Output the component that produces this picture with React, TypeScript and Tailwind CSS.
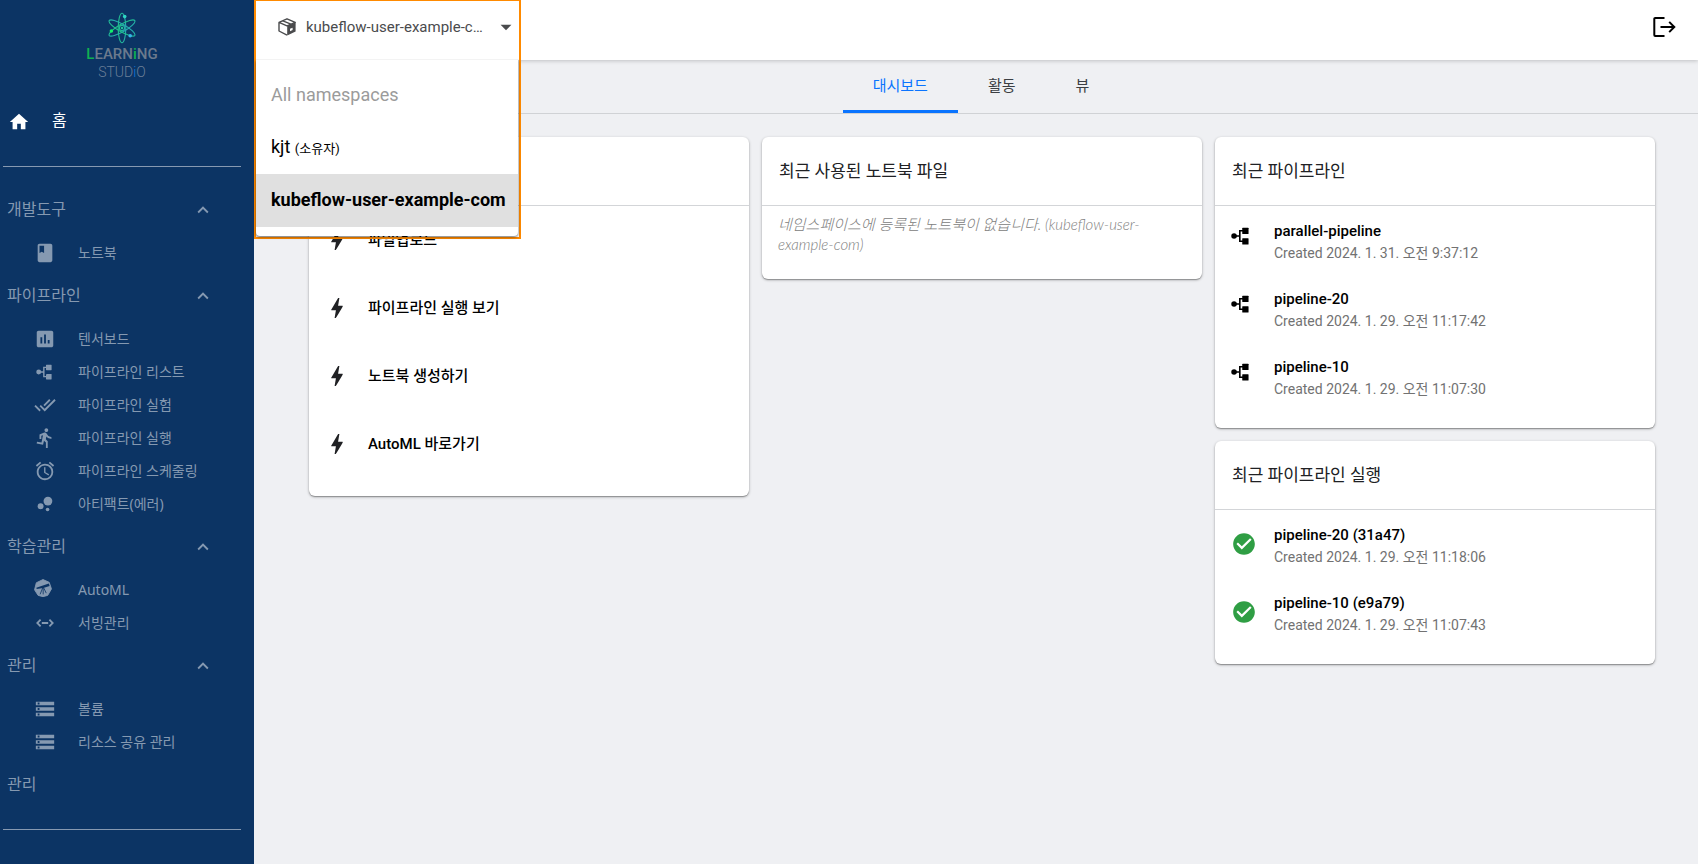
import type { ReactNode } from "react";
import {
  MdAccessAlarm,
  MdArrowDropDown,
  MdAssessment,
  MdBubbleChart,
  MdCheckCircle,
  MdClass,
  MdDirectionsRun,
  MdDoneAll,
  MdHome,
  MdKeyboardArrowUp,
  MdStorage,
} from "react-icons/md";

function PipelineIcon({ className }: { className: string }) {
  return (
    <svg viewBox="0 0 20 20" className={className} fill="currentColor" aria-hidden="true">
      <circle cx="3.4" cy="10" r="3.1" />
      <rect x="12.5" y="0.8" width="7" height="7" rx="0.6" />
      <rect x="12.5" y="12.4" width="7" height="7" rx="0.6" />
      <path d="M4 10h5M14 4.2H9.8v11.6H14" fill="none" stroke="currentColor" strokeWidth="1.8" />
    </svg>
  );
}

function KatibIcon({ className }: { className: string }) {
  return (
    <svg viewBox="0 0 20 20" className={className} aria-hidden="true">
      <path
        d="M10 0.6 16.9 3.7 19.4 11 15.2 18.2 10 19.6 4.6 18.2 0.6 12 2.6 4.2Z"
        fill="currentColor"
        stroke="currentColor"
        strokeLinejoin="round"
      />
      <path d="M3 11.2 2.6 9.8 16.4 4.9l1 2.8-7 2.2Z" fill="#0c3464" />
      <path d="M9.8 9.5 6.8 17M10.2 9.5v7.6M10.6 9.5l3 6.2" stroke="#0c3464" strokeWidth="0.9" />
    </svg>
  );
}

function ServingIcon({ className }: { className: string }) {
  return (
    <svg viewBox="0 0 18 18" className={className} fill="none" stroke="currentColor" strokeWidth="1.8" aria-hidden="true">
      <path d="M4.6 5.6 1.3 9l3.3 3.4M13.4 5.6 16.7 9l-3.3 3.4M5.8 9h6.4" />
    </svg>
  );
}

function BoltIcon() {
  return (
    <svg viewBox="0 0 24 24" className="size-[26px]" fill="#202124" aria-hidden="true">
      <path d="M11 21.2H9.8L11 14H7.2c-.7 0-.6-.5-.3-.9C8.5 10.6 10.6 7 13 2.8h1.2L13 10h3.8c.6 0 .6.4.4.8C13 17.8 11 21.2 11 21.2z" />
    </svg>
  );
}

function BoxIcon() {
  return (
    <svg viewBox="0 0 18 18" className="h-[18px] w-[18px] shrink-0" aria-hidden="true">
      <path d="M9.2 7.8 17.6 4.6V13.4L9.2 17.6Z" fill="#4a4b4d" />
      <path
        d="M9 7.8 1 4.4V13L9 17.2M1 4.4 9 0.8 17.2 4.4 9 7.8ZM4.8 2.8 13 6.2"
        fill="none"
        stroke="#4a4b4d"
        strokeWidth="1.4"
        strokeLinejoin="round"
      />
      <path d="M12 10.8 14.6 9.7V12L12 13.2Z" fill="#fff" />
    </svg>
  );
}

function LogoutIcon() {
  return (
    <svg viewBox="0 0 24 24" className="size-6" fill="none" stroke="#000" strokeWidth="2" aria-hidden="true">
      <path d="M12.5 3H3.2a.9.9 0 0 0-.9.9v16.2a.9.9 0 0 0 .9.9h9.3" />
      <path d="M8.5 12h14M17.2 6.9 22.3 12l-5.1 5.1" />
    </svg>
  );
}

function Logo() {
  return (
    <div className="flex flex-col items-center pt-3">
      <svg viewBox="0 0 28 32" className="h-8 w-7" fill="none" aria-hidden="true">
        <defs>
          <linearGradient id="atom" gradientUnits="userSpaceOnUse" x1="1" y1="0" x2="27" y2="0">
            <stop offset="0" stopColor="#16e05f" />
            <stop offset="0.5" stopColor="#22b59d" />
            <stop offset="1" stopColor="#2f96e0" />
          </linearGradient>
        </defs>
        <g stroke="url(#atom)" strokeWidth="1.1">
          <ellipse cx="14" cy="16" rx="3.8" ry="14.8" />
          <ellipse cx="14" cy="16" rx="3.8" ry="14.8" transform="rotate(60 14 16)" />
          <ellipse cx="14" cy="16" rx="3.8" ry="14.8" transform="rotate(-60 14 16)" />
          <circle cx="14" cy="16" r="2.6" />
        </g>
        <circle cx="14" cy="16" r="1.2" fill="#22c59d" />
        <circle cx="16.7" cy="4.6" r="1.8" fill="#2fd6c4" />
        <circle cx="3.4" cy="19" r="1.8" fill="#12f06a" />
        <circle cx="22.2" cy="23.8" r="1.8" fill="#35b6e6" />
      </svg>
      <p className="mt-px text-[15px] leading-[18px] font-medium text-[#6b7a8d]">
        <span className="text-[#10b052]">L</span>EARN<span className="text-[#10b052]">i</span>NG
      </p>
      <p className="text-sm leading-[18px] font-light text-[#6b7f98]">
        STUD<span className="text-[#0c78d8]">i</span>O
      </p>
    </div>
  );
}

type NavItem = { label: string; icon: ReactNode };
type NavSection = { id: string; label: string; items: NavItem[] };

const navIcon = "size-[22px]";

const sections: NavSection[] = [
  { id: "dev", label: "개발도구", items: [{ label: "노트북", icon: <MdClass className={navIcon} /> }] },
  {
    id: "pipeline",
    label: "파이프라인",
    items: [
      { label: "텐서보드", icon: <MdAssessment className={navIcon} /> },
      { label: "파이프라인 리스트", icon: <PipelineIcon className="mr-0.5 size-4" /> },
      { label: "파이프라인 실험", icon: <MdDoneAll className={navIcon} /> },
      { label: "파이프라인 실행", icon: <MdDirectionsRun className={navIcon} /> },
      { label: "파이프라인 스케줄링", icon: <MdAccessAlarm className={navIcon} /> },
      { label: "아티팩트(에러)", icon: <MdBubbleChart className={navIcon} /> },
    ],
  },
  {
    id: "training",
    label: "학습관리",
    items: [
      { label: "AutoML", icon: <KatibIcon className="mr-1 mb-1 size-[18px]" /> },
      { label: "서빙관리", icon: <ServingIcon className="size-[18px]" /> },
    ],
  },
  {
    id: "manage",
    label: "관리",
    items: [
      { label: "볼륨", icon: <MdStorage className={navIcon} /> },
      { label: "리소스 공유 관리", icon: <MdStorage className={navIcon} /> },
    ],
  },
  { id: "admin", label: "관리", items: [] },
];

function Sidebar() {
  return (
    <aside className="w-[254px] shrink-0 bg-[#0c3464] pr-2.5 font-['Noto_Sans','Noto_Sans_CJK_KR',sans-serif]">
      <div className="font-['Roboto',sans-serif]">
        <Logo />
      </div>
      <a href="#home" className="mt-[15px] flex h-[52px] items-center gap-[22px] pl-2 text-base text-white">
        <MdHome className="size-[22px]" />
        <span className="pb-1">홈</span>
      </a>
      <hr className="mx-[3px] mt-[18px] mb-[17px] border-[#8799b1]" />
      <nav className="text-[#8599b1]">
        {sections.map((section) => (
          <section key={section.id}>
            <button type="button" className="flex h-[53px] w-full items-center justify-between pr-[30px] pb-0.5 pl-[7px] text-base">
              <span className="pb-0.5">{section.label}</span>
              {section.items.length > 0 && <MdKeyboardArrowUp className="size-[22px]" />}
            </button>
            {section.items.map((item) => (
              <a key={item.label} href={`#${section.id}`} className="flex h-[33px] items-center pb-0.5 pl-[34px] text-sm">
                <span className="flex w-11 items-center">
                  <span className="flex w-[22px] justify-center">{item.icon}</span>
                </span>
                {item.label}
              </a>
            ))}
          </section>
        ))}
      </nav>
      <hr className="mx-[3px] mt-[17px] border-[#8799b1]" />
    </aside>
  );
}

function NamespaceSelector() {
  return (
    <div className="absolute top-0 left-0 z-20 w-[267px] border-2 border-t border-[#ff8a00]">
      <button
        type="button"
        aria-haspopup="listbox"
        aria-expanded="true"
        className="relative z-10 flex h-[59px] w-full items-center border-b border-[#f3f3f3] bg-white pb-1.5 pl-[22px] text-[15px] text-[#4a4b4d]"
      >
        <BoxIcon />
        <span className="ml-2.5 flex-1 text-left whitespace-nowrap">kubeflow-user-example-c…</span>
        <MdArrowDropDown className="size-[26px] shrink-0" />
      </button>
      <div
        role="listbox"
        aria-label="Namespace"
        className="mr-px mb-px flex flex-col rounded-b-sm bg-white pt-2 pb-[9px] text-lg text-black shadow-[0_1px_3px_rgba(0,0,0,0.6)]"
      >
        <button type="button" role="option" aria-selected="false" disabled className="h-[53px] px-[15px] text-left text-[#9b9b9b]">
          All namespaces
        </button>
        <button type="button" role="option" aria-selected="false" className="h-[53px] px-[15px] pb-0.5 text-left">
          kjt <span className="text-[13px]">(소유자)</span>
        </button>
        <button
          type="button"
          role="option"
          aria-selected="true"
          className="h-[53px] bg-[#e0e0e0] px-[15px] pb-0.5 text-left font-bold whitespace-nowrap"
        >
          kubeflow-user-example-com
        </button>
      </div>
    </div>
  );
}

function Card({ title, children }: { title?: string; children: ReactNode }) {
  return (
    <section className="rounded-md bg-white shadow-[0_1px_3px_rgba(0,0,0,0.3),0_1px_1px_rgba(0,0,0,0.25)]">
      <header className="flex h-[69px] items-center border-b border-[#d3d5d8] px-[17px] pt-0.5">
        {title && <h2 className="text-[17px] text-[#202124]">{title}</h2>}
      </header>
      {children}
    </section>
  );
}

function QuickLinks({ items }: { items: string[] }) {
  return (
    <ul className="pb-[18px]">
      {items.map((label) => (
        <li key={label}>
          <a href="#link" className="flex h-[68px] items-center pl-[15px] text-[15px] font-medium text-black">
            <span className="w-11">
              <BoltIcon />
            </span>
            {label}
          </a>
        </li>
      ))}
    </ul>
  );
}

type Entry = { name: string; created: string };

function EntryList({ entries, icon }: { entries: Entry[]; icon: ReactNode }) {
  return (
    <ul className="pb-[18px]">
      {entries.map((entry) => (
        <li key={entry.name}>
          <a href="#entry" className="flex h-[68px] items-center pl-4">
            <span className="w-[43px]">{icon}</span>
            <span className="flex flex-col pt-1">
              <span className="text-[15px] leading-[22px] font-medium text-black">{entry.name}</span>
              <span className="text-sm leading-[22px] text-[#727272]">Created {entry.created}</span>
            </span>
          </a>
        </li>
      ))}
    </ul>
  );
}

const pipelines: Entry[] = [
  { name: "parallel-pipeline", created: "2024. 1. 31. 오전 9:37:12" },
  { name: "pipeline-20", created: "2024. 1. 29. 오전 11:17:42" },
  { name: "pipeline-10", created: "2024. 1. 29. 오전 11:07:30" },
];

const runs: Entry[] = [
  { name: "pipeline-20 (31a47)", created: "2024. 1. 29. 오전 11:18:06" },
  { name: "pipeline-10 (e9a79)", created: "2024. 1. 29. 오전 11:07:43" },
];

export default function App() {
  return (
    <div className="flex min-h-screen bg-[#eff0f3] font-['Roboto','Noto_Sans_CJK_KR',sans-serif]">
      <Sidebar />
      <div className="relative min-w-0 flex-1">
        <NamespaceSelector />
        <header className="relative z-10 flex h-[60px] items-center justify-end bg-white pr-[22px] pb-1.5 shadow-[0_1px_4px_rgba(0,0,0,0.2)]">
          <button type="button" aria-label="Logout">
            <LogoutIcon />
          </button>
        </header>
        <nav className="flex h-[54px] justify-center border-b border-[#d0d2d5] pl-2.5 text-[15px] text-[#3c3f43]">
          <a href="#dashboard" className="flex items-center border-b-[3px] border-[#0a74ff] px-[30px] pt-0.5 text-[#0a74ff]">
            대시보드
          </a>
          <a href="#activity" className="flex items-center border-b-[3px] border-transparent px-[30px] pt-0.5">
            활동
          </a>
          <a href="#view" className="flex items-center border-b-[3px] border-transparent px-[30px] pt-0.5">
            뷰
          </a>
        </nav>
        <main className="grid grid-cols-3 items-start gap-[13px] pt-[23px] pr-[43px] pl-[55px]">
          <Card>
            <QuickLinks items={["파일업로드", "파이프라인 실행 보기", "노트북 생성하기", "AutoML 바로가기"]} />
          </Card>
          <Card title="최근 사용된 노트북 파일">
            <p className="px-4 pt-2 pb-[25px] font-['Lato','Noto_Sans_CJK_KR',sans-serif] text-[15px] leading-5 font-light text-[#808080] italic">
              네임스페이스에 등록된 노트북이 없습니다. (kubeflow-user-example-com)
            </p>
          </Card>
          <div className="flex flex-col gap-[13px]">
            <Card title="최근 파이프라인">
              <EntryList entries={pipelines} icon={<PipelineIcon className="mb-2 size-[18px]" />} />
            </Card>
            <Card title="최근 파이프라인 실행">
              <EntryList entries={runs} icon={<MdCheckCircle className="size-[26px] text-[#2f9e44]" />} />
            </Card>
          </div>
        </main>
      </div>
    </div>
  );
}
